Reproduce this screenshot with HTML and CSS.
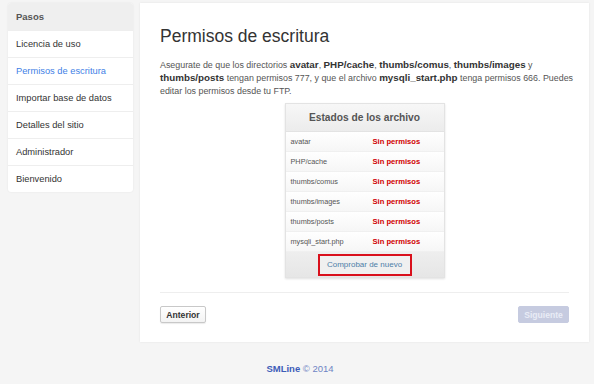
FILE: index.html
```html
<!DOCTYPE html>
<html lang="es">
<head>
<meta charset="utf-8">
<title>Permisos de escritura</title>
<link rel="stylesheet" href="styles.css">
</head>
<body>
<div class="layout">
  <aside class="sidebar">
    <div class="side-head">Pasos</div>
    <ul class="steps">
      <li>Licencia de uso</li>
      <li class="active">Permisos de escritura</li>
      <li>Importar base de datos</li>
      <li>Detalles del sitio</li>
      <li>Administrador</li>
      <li>Bienvenido</li>
    </ul>
  </aside>
  <main class="panel">
    <h1 class="title">Permisos de escritura</h1>
    <p class="intro">Asegurate de que los directorios <b>avatar</b>, <b>PHP/cache</b>, <b>thumbs/comus</b>, <b>thumbs/images</b> y<br><b>thumbs/posts</b> tengan permisos 777, y que el archivo <b>mysqli_start.php</b> tenga permisos 666. Puedes editar los permisos desde tu FTP.</p>
    <div class="status-wrap">
      <div class="status">
        <div class="status-head">Estados de los archivo</div>
        <div class="row"><span class="name">avatar</span><span class="state">Sin permisos</span></div>
        <div class="row"><span class="name">PHP/cache</span><span class="state">Sin permisos</span></div>
        <div class="row"><span class="name">thumbs/comus</span><span class="state">Sin permisos</span></div>
        <div class="row"><span class="name">thumbs/images</span><span class="state">Sin permisos</span></div>
        <div class="row"><span class="name">thumbs/posts</span><span class="state">Sin permisos</span></div>
        <div class="row"><span class="name">mysqli_start.php</span><span class="state">Sin permisos</span></div>
        <div class="status-foot"><span class="recheck">Comprobar de nuevo</span></div>
      </div>
    </div>
    <div class="actions">
      <button class="btn">Anterior</button>
      <button class="btn btn-next">Siguiente</button>
    </div>
  </main>
</div>
<footer class="foot"><b>SMLine</b> © 2014</footer>
</body>
</html>
```
FILE: styles.css
```css
html, body {
  margin: 0;
  padding: 0;
}
body {
  background: #f5f5f5;
  font-family: "Liberation Sans", Arial, sans-serif;
  color: #333;
  height: 384px;
  overflow: hidden;
}
.layout {
  display: flex;
  gap: 7px;
  padding: 3px 5px 0 8px;
  align-items: flex-start;
}
.sidebar {
  width: 125px;
  flex: none;
  background: #fff;
  border-radius: 3px;
  box-shadow: 0 0 2px rgba(0,0,0,0.08);
  overflow: hidden;
}
.side-head {
  height: 27px;
  line-height: 27px;
  background: #efefef;
  padding-left: 8px;
  font-size: 9.5px;
  font-weight: bold;
  color: #555;
}
.steps {
  list-style: none;
  margin: 0;
  padding: 0;
}
.steps li {
  height: 27px;
  line-height: 27px;
  padding-left: 8px;
  font-size: 9.3px;
  color: #333;
  border-top: 1px solid #eee;
  box-sizing: border-box;
}
.steps li.active {
  color: #3f7fe6;
}
.panel {
  flex: 1;
  height: 339px;
  box-sizing: border-box;
  background: #fff;
  box-shadow: 0 0 2px rgba(0,0,0,0.08);
  padding: 22px 20px 0 20px;
  display: flex;
  flex-direction: column;
}
.title {
  margin: 0;
  font-size: 17.5px;
  font-weight: normal;
  line-height: 22px;
  color: #333;
}
.intro {
  margin: 12px -20px 0 0;
  font-size: 8.9px;
  line-height: 13px;
  color: #555;
}
.intro b {
  color: #333;
  font-size: 9.8px;
  line-height: 1;
}
.status-wrap {
  display: flex;
  justify-content: center;
  margin-top: 5px;
}
.status {
  width: 158px;
  border: 1px solid #e3e3e3;
  box-shadow: 0 1px 2px rgba(0,0,0,0.12);
  background: #fafafa;
}
.status-head {
  height: 27px;
  line-height: 27px;
  text-align: center;
  font-size: 10.2px;
  font-weight: bold;
  color: #555;
  background: linear-gradient(#f7f7f7, #ececec);
  border-bottom: 1px solid #e3e3e3;
}
.row {
  display: flex;
  height: 20px;
  align-items: center;
  padding-left: 5px;
  border-bottom: 1px solid #f0f0f0;
  background: linear-gradient(#ffffff, #f6f6f6);
  box-sizing: border-box;
}
.name {
  width: 82px;
  font-size: 7.3px;
  color: #555;
}
.state {
  font-size: 7.6px;
  font-weight: bold;
  color: #d00000;
}
.status-foot {
  height: 25px;
  display: flex;
  justify-content: center;
  align-items: center;
  background: linear-gradient(#eeeeee, #e6e6e6);
}
.recheck {
  display: block;
  box-sizing: border-box;
  width: 94px;
  height: 22px;
  line-height: 18px;
  text-align: center;
  border: 2px solid #d9101c;
  background: #f0f0f0;
  color: #4d7ea8;
  font-size: 8px;
}
.actions {
  margin-top: auto;
  margin-bottom: 19px;
  border-top: 1px solid #eee;
  padding-top: 13px;
  display: flex;
  justify-content: space-between;
}
.btn {
  height: 17px;
  width: 46px;
  padding: 0;
  font-family: "Liberation Sans", Arial, sans-serif;
  font-size: 8.6px;
  font-weight: bold;
  color: #333;
  background: linear-gradient(#ffffff, #f3f3f3);
  border: 1px solid #c8c8c8;
  border-radius: 2px;
  box-shadow: 0 1px 1px rgba(0,0,0,0.08);
}
.btn-next {
  width: 51px;
  color: #e9ecf6;
  background: #c6cbe0;
  border-color: #c6cbe0;
  box-shadow: none;
}
.foot {
  text-align: center;
  margin-top: 21px;
  padding-left: 6px;
  font-size: 9.5px;
  color: #6f84c4;
}
.foot b {
  color: #3d5cb8;
}
```
